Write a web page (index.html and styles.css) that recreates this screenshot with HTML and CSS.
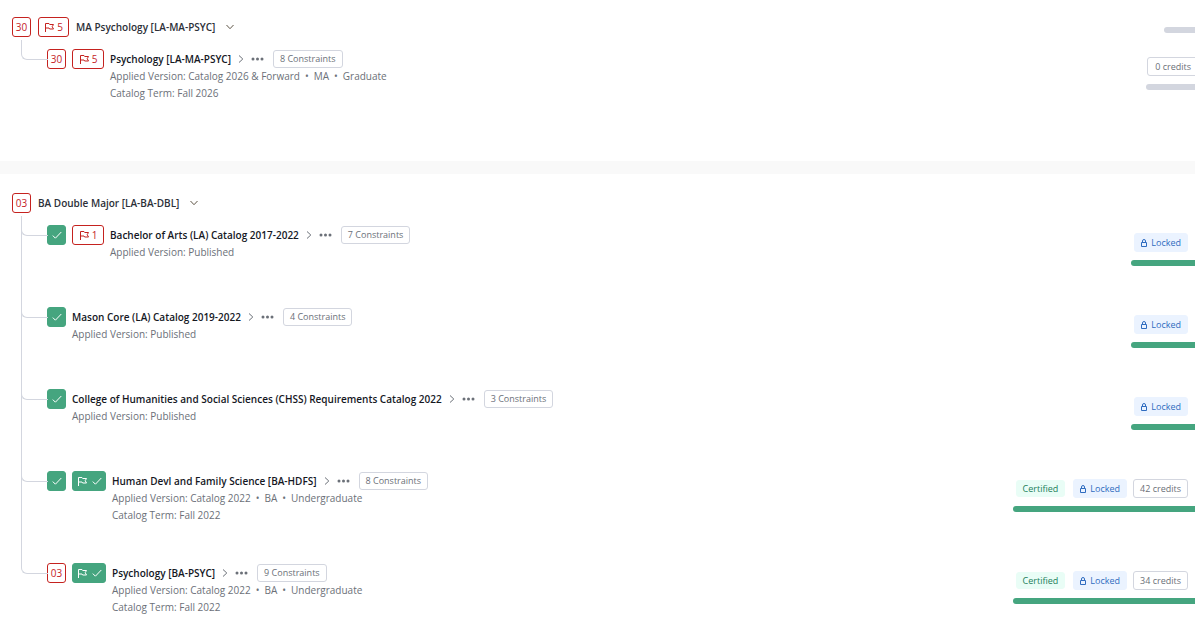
FILE: index.html
```
<!DOCTYPE html>
<html lang="en">
<head>
  <meta charset="UTF-8">
  <meta name="viewport" content="width=device-width, initial-scale=1.0">
  <title>Programs</title>
  <link rel="stylesheet" href="styles.css">
</head>
<body>
  <!-- shared icons -->
  <svg class="sprite" aria-hidden="true">
    <symbol id="flag" viewBox="0 0 10 10">
      <path d="M1.5 10V1.5H5l.7 1H9.5L8.2 4.7l1.3 2.3H5.6L5 6H1.5"/>
    </symbol>
    <symbol id="check" viewBox="0 0 10 10">
      <path d="M.8 5.6 3.4 8.2 9.3 2"/>
    </symbol>
    <symbol id="right" viewBox="0 0 6 8">
      <path d="M1 .5 4.8 4 1 7.5"/>
    </symbol>
    <symbol id="down" viewBox="0 0 8 6">
      <path d="M.5 1 4 4.7 7.5 1"/>
    </symbol>
    <symbol id="dots" viewBox="0 0 13 4">
      <circle cx="2" cy="2" r="1.5"/><circle cx="6.5" cy="2" r="1.5"/><circle cx="11" cy="2" r="1.5"/>
    </symbol>
    <symbol id="lock" viewBox="0 0 6 8">
      <path d="M.5 3.5h5v4h-5zM1.5 3.5V2a1.5 1.5 0 0 1 3 0v1.5"/>
    </symbol>
  </svg>

  <section class="program">
    <header class="program-head">
      <span class="badge">30</span>
      <span class="badge flag"><svg class="icon"><use href="#flag"/></svg>5</span>
      <h2>MA Psychology [LA-MA-PSYC]</h2>
      <button class="toggle" aria-label="Collapse"><svg class="down"><use href="#down"/></svg></button>
      <div class="bar bar-short"></div>
    </header>
    <ul class="tree">
      <li class="row">
        <span class="badge">30</span>
        <span class="badge flag flag-wide"><svg class="icon"><use href="#flag"/></svg>5</span>
        <div class="info">
          <div class="title">
            <a href="#">Psychology [LA-MA-PSYC]<svg class="right"><use href="#right"/></svg></a>
            <button class="more" aria-label="More"><svg class="dots"><use href="#dots"/></svg></button>
            <button class="tag">8 Constraints</button>
          </div>
          <p>Applied Version: Catalog 2026 &amp; Forward<i>•</i>MA<i>•</i>Graduate</p>
          <p>Catalog Term: Fall 2026</p>
        </div>
        <div class="status status-cut">
          <div class="tags"><span class="tag">0 credits</span></div>
          <div class="bar"></div>
        </div>
      </li>
    </ul>
  </section>

  <section class="program">
    <header class="program-head">
      <span class="badge">03</span>
      <h2>BA Double Major [LA-BA-DBL]</h2>
      <button class="toggle" aria-label="Collapse"><svg class="down"><use href="#down"/></svg></button>
    </header>
    <ul class="tree">
      <li class="row">
        <span class="badge done"><svg class="icon"><use href="#check"/></svg></span>
        <span class="badge flag flag-wide"><svg class="icon"><use href="#flag"/></svg>1</span>
        <div class="info">
          <div class="title">
            <a href="#">Bachelor of Arts (LA) Catalog 2017-2022<svg class="right"><use href="#right"/></svg></a>
            <button class="more" aria-label="More"><svg class="dots"><use href="#dots"/></svg></button>
            <button class="tag">7 Constraints</button>
          </div>
          <p>Applied Version: Published</p>
        </div>
        <div class="status">
          <div class="tags"><span class="tag locked"><svg class="lock"><use href="#lock"/></svg>Locked</span></div>
          <div class="bar full"></div>
        </div>
      </li>
      <li class="row">
        <span class="badge done"><svg class="icon"><use href="#check"/></svg></span>
        <div class="info">
          <div class="title">
            <a href="#">Mason Core (LA) Catalog 2019-2022<svg class="right"><use href="#right"/></svg></a>
            <button class="more" aria-label="More"><svg class="dots"><use href="#dots"/></svg></button>
            <button class="tag">4 Constraints</button>
          </div>
          <p>Applied Version: Published</p>
        </div>
        <div class="status">
          <div class="tags"><span class="tag locked"><svg class="lock"><use href="#lock"/></svg>Locked</span></div>
          <div class="bar full"></div>
        </div>
      </li>
      <li class="row">
        <span class="badge done"><svg class="icon"><use href="#check"/></svg></span>
        <div class="info">
          <div class="title">
            <a href="#">College of Humanities and Social Sciences (CHSS) Requirements Catalog 2022<svg class="right"><use href="#right"/></svg></a>
            <button class="more" aria-label="More"><svg class="dots"><use href="#dots"/></svg></button>
            <button class="tag">3 Constraints</button>
          </div>
          <p>Applied Version: Published</p>
        </div>
        <div class="status">
          <div class="tags"><span class="tag locked"><svg class="lock"><use href="#lock"/></svg>Locked</span></div>
          <div class="bar full"></div>
        </div>
      </li>
      <li class="row">
        <span class="badge done"><svg class="icon"><use href="#check"/></svg></span>
        <span class="badge done flag-done"><svg class="icon"><use href="#flag"/></svg><svg class="icon"><use href="#check"/></svg></span>
        <div class="info">
          <div class="title">
            <a href="#">Human Devl and Family Science [BA-HDFS]<svg class="right"><use href="#right"/></svg></a>
            <button class="more" aria-label="More"><svg class="dots"><use href="#dots"/></svg></button>
            <button class="tag">8 Constraints</button>
          </div>
          <p>Applied Version: Catalog 2022<i>•</i>BA<i>•</i>Undergraduate</p>
          <p>Catalog Term: Fall 2022</p>
        </div>
        <div class="status">
          <div class="tags">
            <span class="tag certified">Certified</span>
            <span class="tag locked"><svg class="lock"><use href="#lock"/></svg>Locked</span>
            <span class="tag">42 credits</span>
          </div>
          <div class="bar full"></div>
        </div>
      </li>
      <li class="row">
        <span class="badge">03</span>
        <span class="badge done flag-done"><svg class="icon"><use href="#flag"/></svg><svg class="icon"><use href="#check"/></svg></span>
        <div class="info">
          <div class="title">
            <a href="#">Psychology [BA-PSYC]<svg class="right"><use href="#right"/></svg></a>
            <button class="more" aria-label="More"><svg class="dots"><use href="#dots"/></svg></button>
            <button class="tag">9 Constraints</button>
          </div>
          <p>Applied Version: Catalog 2022<i>•</i>BA<i>•</i>Undergraduate</p>
          <p>Catalog Term: Fall 2022</p>
        </div>
        <div class="status">
          <div class="tags">
            <span class="tag certified">Certified</span>
            <span class="tag locked"><svg class="lock"><use href="#lock"/></svg>Locked</span>
            <span class="tag">34 credits</span>
          </div>
          <div class="bar full"></div>
        </div>
      </li>
    </ul>
  </section>
</body>
</html>
```
FILE: styles.css
```
* {
  box-sizing: border-box;
}
body {
  margin: 0;
  font-family: "Open Sans", "Noto Sans", sans-serif;
  font-size: 10px;
  color: #6b7078;
  background-color: #fff;
  overflow: hidden;
}
h2, p, ul {
  margin: 0;
  padding: 0;
}
button {
  font-family: inherit;
  border: none;
  background: none;
  padding: 0;
  cursor: pointer;
}
svg {
  display: block;
  flex: none;
  fill: none;
  stroke: currentColor;
}
.sprite {
  width: 0;
  height: 0;
  position: absolute;
}

/* program group */
.program {
  padding-top: 17px;
  overflow: hidden;
}
.program + .program {
  padding-top: 19px;
  border-top: 13px solid #f9f9f9;
}
.program-head {
  display: flex;
  align-items: center;
  gap: 7px;
  height: 20px;
  padding-left: 12px;
}
.program-head h2 {
  font-size: 10px;
  font-weight: 600;
  color: #2c3038;
}
.toggle {
  margin-left: 4px;
  color: #5e5546;
}

/* badges */
.badge {
  display: flex;
  flex: none;
  align-items: center;
  justify-content: center;
  gap: 3px;
  width: 19px;
  height: 20px;
  border: 1px solid #c5221f;
  border-radius: 3px;
  color: #c5221f;
}
.flag {
  width: 31px;
}
.flag-wide {
  width: 32px;
}
.done {
  border-color: #45a57f;
  background-color: #45a57f;
  color: #fff;
}
.flag-done {
  width: 34px;
  gap: 5px;
}
.icon {
  width: 10px;
  height: 10px;
}
.right {
  width: 6px;
  height: 8px;
}
.down {
  width: 8px;
  height: 6px;
}
.dots {
  width: 13px;
  height: 4px;
  fill: currentColor;
  stroke: none;
}
.lock {
  width: 6px;
  height: 8px;
}

/* requirement rows */
.tree {
  list-style: none;
  margin-top: 12px;
  padding-left: 47px;
}
.row {
  position: relative;
  display: flex;
  gap: 6px;
  padding-bottom: 39px;
}
.program:first-of-type .row {
  padding-bottom: 59px;
}
.row::before {
  content: "";
  position: absolute;
  left: -26px;
  top: -9px;
  width: 26px;
  height: 19px;
  border-left: 1px solid #d3d6df;
  border-bottom: 1px solid #d3d6df;
  border-bottom-left-radius: 6px;
}
.row:not(:last-child)::after {
  content: "";
  position: absolute;
  left: -26px;
  top: -9px;
  bottom: 9px;
  border-left: 1px solid #d3d6df;
}
.info {
  flex: 1;
}
.info p {
  line-height: 17px;
}
.info i {
  margin: 0 5px;
  font-style: normal;
}
.title {
  display: flex;
  align-items: center;
  height: 19px;
}
.title a {
  display: flex;
  align-items: center;
  gap: 7px;
  color: #15181f;
  font-weight: 600;
  text-decoration: none;
}
.right, .more {
  color: #6b7078;
}
.more {
  margin: 0 9px 0 7px;
}

/* tags and progress */
.tag {
  display: flex;
  align-items: center;
  height: 19px;
  padding: 0 6px;
  border: 1px solid #d3d6df;
  border-radius: 3px;
  color: #6b7078;
  font-size: 9px;
  white-space: nowrap;
}
.title .tag {
  height: 18px;
}
.locked {
  gap: 4px;
  border-color: #ebf3ff;
  background-color: #ebf3ff;
  color: #2f6cc0;
}
.certified {
  height: 17px;
  margin-right: 2px;
  border-color: #e9fdf6;
  background-color: #e9fdf6;
  color: #23805a;
}
.status {
  padding-top: 8px;
  padding-bottom: 2px;
}
.status-cut {
  margin-right: -3px;
}
.tags {
  display: flex;
  align-items: center;
  gap: 6px;
  margin-bottom: 8px;
  padding: 0 7px 0 3px;
}
.status-cut .tags {
  padding: 0 0 0 1px;
}
.status-cut .tag {
  padding-left: 7px;
}
.bar {
  height: 6px;
  border-radius: 3px 0 0 3px;
  background-color: #d3d6df;
}
.bar-short {
  width: 31px;
  margin: 6px 0 0 auto;
}
.full {
  background-color: #45a57f;
}
```
